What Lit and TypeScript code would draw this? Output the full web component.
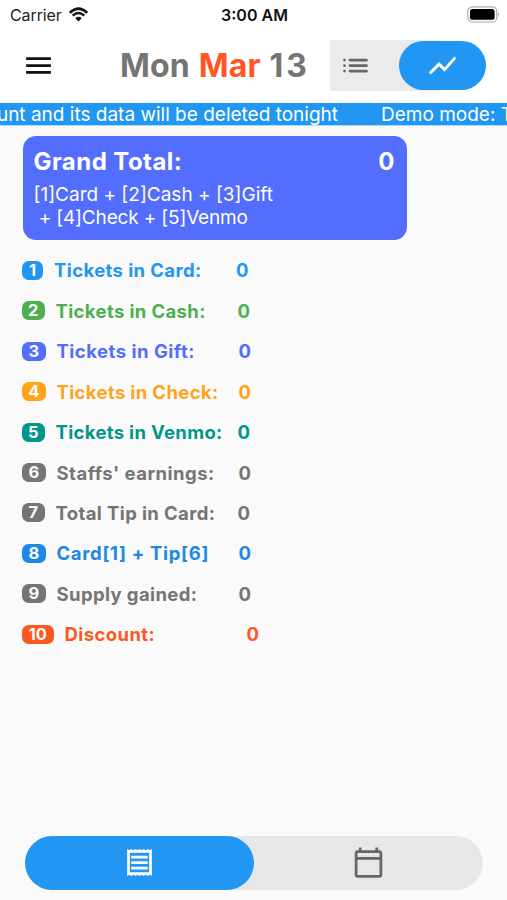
import { LitElement, html, css, svg } from "lit";
import { customElement } from "lit/decorators.js";

const ICONS: Record<string, string> = {
  menu: "M3 18h18v-2H3v2zm0-5h18v-2H3v2zm0-7v2h18V6H3z",
  list: "M4 13c.55 0 1-.45 1-1s-.45-1-1-1-1 .45-1 1 .45 1 1 1zm0 4c.55 0 1-.45 1-1s-.45-1-1-1-1 .45-1 1 .45 1 1 1zm0-8c.55 0 1-.45 1-1s-.45-1-1-1-1 .45-1 1 .45 1 1 1zm4 4h12c.55 0 1-.45 1-1s-.45-1-1-1H8c-.55 0-1 .45-1 1s.45 1 1 1zm0 4h12c.55 0 1-.45 1-1s-.45-1-1-1H8c-.55 0-1 .45-1 1s.45 1 1 1zM7 8c0 .55.45 1 1 1h12c.55 0 1-.45 1-1s-.45-1-1-1H8c-.55 0-1 .45-1 1z",
  chart: "M3.5 18.49l6-6.01 4 4L22 6.92l-1.41-1.41-7.09 7.97-4-4L2 16.99z",
  receipt: "M19.5 3.1L18 2.2l-1.5.9L15 2.2l-1.5.9L12 2.2l-1.5.9L9 2.2l-1.5.9L6 2.2l-1.5.9L3 2.2v19.6l1.5-.9 1.5.9 1.5-.9 1.5.9 1.5-.9 1.5.9 1.5-.9 1.5.9 1.5-.9 1.5.9 1.5-.9 1.5.9V2.2l-1.5.9zM19 19.09H5V4.91h14v14.18zM6 15h12v2H6zm0-4h12v2H6zm0-4h12v2H6z",
  calendar: "M20 3h-1V1h-2v2H7V1H5v2H4c-1.1 0-2 .9-2 2v16c0 1.1.9 2 2 2h16c1.1 0 2-.9 2-2V5c0-1.1-.9-2-2-2zm0 18H4V10h16v11zm0-13H4V5h16v3z",
};

const icon = (name: string) => html`<svg class="icon" viewBox="0 0 24 24">${svg`<path d=${ICONS[name]} fill="currentColor"></path>`}</svg>`;

interface Row { n: number; label: string; color: string; badge: number; track: number; }

const ROWS: Row[] = [
  { n: 1, label: "Tickets in Card:", color: "#2196f3", badge: 21, track: 0.4 },
  { n: 2, label: "Tickets in Cash:", color: "#4caf50", badge: 22.5, track: 0.37 },
  { n: 3, label: "Tickets in Gift:", color: "#536dfe", badge: 23.5, track: 0.5 },
  { n: 4, label: "Tickets in Check:", color: "#ffa31a", badge: 23.5, track: 0.36 },
  { n: 5, label: "Tickets in Venmo:", color: "#009688", badge: 22.5, track: 0.33 },
  { n: 6, label: "Staffs' earnings:", color: "#757575", badge: 23.5, track: 0.48 },
  { n: 7, label: "Total Tip in Card:", color: "#757575", badge: 22.5, track: 0.38 },
  { n: 8, label: "Card[1] + Tip[6]", color: "#1e88e5", badge: 23.5, track: 0.68 },
  { n: 9, label: "Supply gained:", color: "#757575", badge: 23.5, track: 0.38 },
  { n: 10, label: "Discount:", color: "#ff5722", badge: 31.5, track: 0.4 },
];

@customElement("app-root")
export class AppRoot extends LitElement {
  static styles = css`
    :host {
      display: flex;
      flex-direction: column;
      height: 900px;
      width: 507px;
      overflow: hidden;
      background: #fafafa;
      font-family: Inter, "Liberation Sans", sans-serif;
      color: #757575;
    }
    * { box-sizing: border-box; }
    .icon { width: 33px; height: 33px; display: block; flex: none; }
    .status {
      height: 29px;
      flex: none;
      background: #fff;
      display: grid;
      grid-template-columns: 1fr auto 1fr;
      align-items: center;
      padding: 0 8px 0 10px;
      font-size: 16px;
      color: #222;
    }
    .carrier { display: flex; align-items: center; gap: 6px; letter-spacing: -0.1px; }
    .wifi { width: 21px; height: 15px; display: block; margin-bottom: 1px; }
    .clock { font-weight: 600; color: #111; letter-spacing: 0; }
    .battery { justify-self: end; width: 33px; height: 17px; display: block; margin: 0 -1px 1px 0; }
    .header {
      height: 73px;
      flex: none;
      background: #fff;
      display: flex;
      align-items: center;
      padding: 0 22px;
      color: #111;
    }
    .title {
      margin-left: 65px;
      width: 210px;
      font-size: 32px;
      font-weight: 700;
      color: #757575;
      letter-spacing: 0.2px;
      word-spacing: 1px;
      white-space: nowrap;
    }
    .day { letter-spacing: 3px; }
    .accent { color: #ff5722; }
    .toggle {
      width: 155px;
      height: 51px;
      display: flex;
      align-items: center;
      background: linear-gradient(to right, #ebebeb 110px, transparent 110px);
      color: #666;
      padding-left: 9px;
    }
    .chip {
      margin-left: 27px;
      width: 86.5px;
      height: 49px;
      border-radius: 25px;
      background: #2196f3;
      color: #fff;
      display: flex;
      align-items: center;
      justify-content: center;
      flex: none;
    }
    .marquee {
      height: 23px;
      margin-top: 1px;
      flex: none;
      border-bottom: 1px solid #a5dcff;
      background: #2196f3;
      color: #fff;
      font-size: 19px;
      line-height: 23px;
      display: flex;
      overflow: hidden;
      white-space: nowrap;
    }
    .msg { flex: none; width: 381px; display: flex; justify-content: flex-end; padding-right: 43px; }
    .msg span { flex: none; }
    .card {
      margin: 10px 0 0 22.5px;
      width: 384.5px;
      height: 103.5px;
      flex: none;
      border-radius: 13px;
      background: #536dfe;
      color: #fff;
      padding: 11px 12px 0 11px;
    }
    .total { display: flex; justify-content: space-between; font-size: 24px; line-height: 30px; font-weight: 700; letter-spacing: 0.45px; margin-bottom: 5.5px; }
    .formula { font-size: 19px; line-height: 23px; white-space: pre; }
    .second { letter-spacing: -0.17px; }
    .rows { margin: 10.6px 0 0 22px; display: flex; flex-direction: column; flex: none; }
    .row { height: 40.45px; display: flex; align-items: center; font-size: 18.5px; font-weight: 700; }
    .badge {
      height: 19px;
      border-radius: 6.5px;
      color: #fafafa;
      font-size: 16.5px;
      line-height: 19px;
      text-align: center;
      font-weight: 700;
      flex: none;
    }
    .label { margin-left: 11px; width: 182px; flex: none; }
    .tabs {
      margin: auto 24.5px 10.5px 25px;
      height: 54px;
      border-radius: 27px;
      background: #e7e7e7;
      display: flex;
      flex: none;
    }
    .tab { flex: 1; display: flex; align-items: center; justify-content: center; border-radius: 27px; color: #666; }
    .on { background: #2196f3; color: #fff; }
  `;

  render() {
    return html`
      <div class="status">
        <div class="carrier"><span>Carrier</span>
          <svg class="wifi" viewBox="0 0 21 16">
            <path d="M1.2 6.2Q10.5 -2.6 19.8 6.2" fill="none" stroke="#111" stroke-width="2.7"></path>
            <path d="M4.3 9.3Q10.5 3.6 16.7 9.3" fill="none" stroke="#111" stroke-width="2.6"></path>
            <path d="M7.1 11.9Q10.5 9 13.9 11.9L10.5 15.4Z" fill="#111"></path>
          </svg></div>
        <span class="clock">3:00 AM</span>
        <svg class="battery" viewBox="0 0 33 17">
          <rect x="0.8" y="0.8" width="29" height="15.2" rx="4.6" fill="#fff" stroke="#aaa" stroke-width="1.2"></rect>
          <rect x="3" y="3" width="24.6" height="10.8" rx="2.6" fill="#000"></rect>
          <path d="M31 5.9Q33 8.4 31 10.9Z" fill="#aaa"></path>
        </svg>
      </div>
      <div class="header">
        ${icon("menu")}
        <div class="title">Mon <span class="accent">Mar</span> <span class="day">13</span></div>
        <div class="toggle">${icon("list")}<div class="chip">${icon("chart")}</div></div>
      </div>
      <div class="marquee"><div class="msg"><span>Demo mode: This account and its data will be deleted tonight</span></div><span>Demo mode: This account</span></div>
      <div class="card">
        <div class="total"><span>Grand Total:</span><span>0</span></div>
        <div class="formula">[1]Card + [2]Cash + [3]Gift</div>
        <div class="formula second"> + [4]Check + [5]Venmo</div>
      </div>
      <div class="rows">
        ${ROWS.map((r) => html`<div class="row" style="color:${r.color}"><span class="badge" style="background:${r.color};width:${r.badge}px">${r.n}</span><span class="label" style="letter-spacing:${r.track}px">${r.label}</span><span>0</span></div>`)}
      </div>
      <div class="tabs"><div class="tab on">${icon("receipt")}</div><div class="tab">${icon("calendar")}</div></div>
    `;
  }
}
